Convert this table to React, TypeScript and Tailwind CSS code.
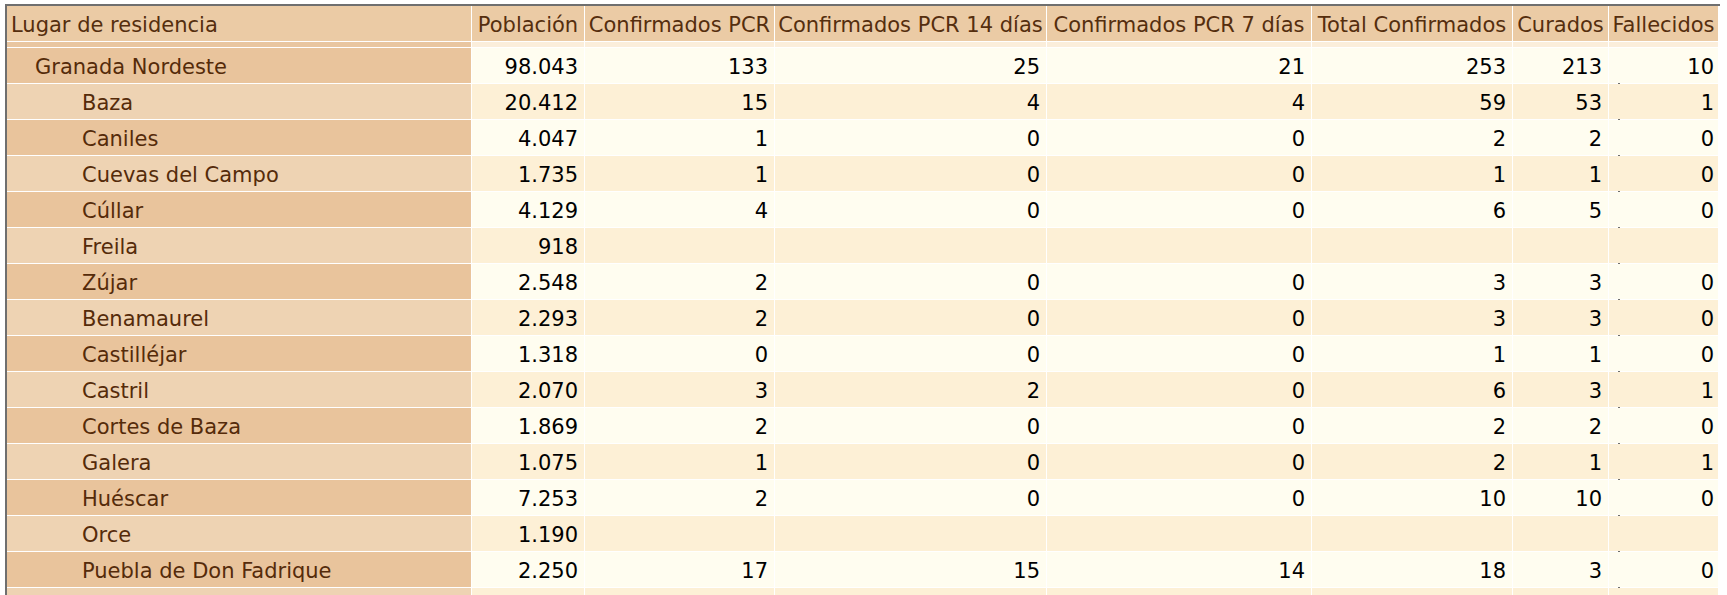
import React from "react";

type Row = { name: string; level: number; v: string[] };

const rows: Row[] = [
  { name: "Granada Nordeste", level: 1, v: ["98.043", "133", "25", "21", "253", "213", "10"] },
  { name: "Baza", level: 2, v: ["20.412", "15", "4", "4", "59", "53", "1"] },
  { name: "Caniles", level: 2, v: ["4.047", "1", "0", "0", "2", "2", "0"] },
  { name: "Cuevas del Campo", level: 2, v: ["1.735", "1", "0", "0", "1", "1", "0"] },
  { name: "Cúllar", level: 2, v: ["4.129", "4", "0", "0", "6", "5", "0"] },
  { name: "Freila", level: 2, v: ["918", "", "", "", "", "", ""] },
  { name: "Zújar", level: 2, v: ["2.548", "2", "0", "0", "3", "3", "0"] },
  { name: "Benamaurel", level: 2, v: ["2.293", "2", "0", "0", "3", "3", "0"] },
  { name: "Castilléjar", level: 2, v: ["1.318", "0", "0", "0", "1", "1", "0"] },
  { name: "Castril", level: 2, v: ["2.070", "3", "2", "0", "6", "3", "1"] },
  { name: "Cortes de Baza", level: 2, v: ["1.869", "2", "0", "0", "2", "2", "0"] },
  { name: "Galera", level: 2, v: ["1.075", "1", "0", "0", "2", "1", "1"] },
  { name: "Huéscar", level: 2, v: ["7.253", "2", "0", "0", "10", "10", "0"] },
  { name: "Orce", level: 2, v: ["1.190", "", "", "", "", "", ""] },
  { name: "Puebla de Don Fadrique", level: 2, v: ["2.250", "17", "15", "14", "18", "3", "0"] },
  { name: "", level: 2, v: ["872", "0", "0", "0", "15", "11", "0"] },
];

const headers = [
  "Población",
  "Confirmados PCR",
  "Confirmados PCR 14 días",
  "Confirmados PCR 7 días",
  "Total Confirmados",
  "Curados",
  "Fallecidos",
];

const cols = "grid grid-cols-[464px_112px_189px_271px_264px_200px_95px_109px] gap-x-px";
const font = { fontFamily: '"DejaVu Sans", Tahoma, sans-serif' };

export default function App() {
  return (
    <div className="min-h-[595px] bg-white pt-1 pl-[5px]" style={font}>
      <div className="w-[1715px] border-t-2 border-l-2 border-[#6f6f6f] bg-white text-[21px] leading-none">
        {/* header */}
        <div className={`${cols} h-[35px] bg-white`}>
          <div className="flex items-center bg-[#ebcba5] pt-[4px] pl-[4px] text-[#552e0e]">Lugar de residencia</div>
          {headers.map((h) => (
            <div
              key={h}
              className="flex items-center justify-center overflow-hidden whitespace-nowrap bg-[#ebcba5] pt-[4px] text-[#552e0e]"
            >
              {h}
            </div>
          ))}
        </div>
        {/* strip */}
        <div className={`${cols} mt-px h-[5px] w-[1613px] border-r-2 border-[#6f6f6f]`}>
          <div className="bg-[#e9c6a0]" />
          {headers.map((h) => (
            <div key={h} className="bg-[#fbeedb]" />
          ))}
        </div>
        {/* body */}
        <div className="mt-px flex w-[1613px] flex-col gap-y-px border-r-2 border-[#6f6f6f] bg-white">
          {rows.map((r, i) => {
            const dark = i % 2 === 0;
            return (
              <div key={i} className={`${cols} h-[35px]`}>
                <div
                  className={`flex items-center whitespace-nowrap pt-[4px] text-[#552b0a] ${
                    dark ? "bg-[#e9c49c]" : "bg-[#eed3b3]"
                  } ${r.level === 1 ? "pl-[28px]" : "pl-[75px]"}`}
                >
                  {r.name}
                </div>
                {r.v.map((val, j) => (
                  <div
                    key={j}
                    className={`flex items-center justify-end pt-[4px] text-black ${
                      dark ? "bg-[#fffdf0]" : "bg-[#fdf0d6]"
                    } ${j === 6 ? "pr-[4px]" : "pr-[6px]"}`}
                  >
                    {val}
                  </div>
                ))}
              </div>
            );
          })}
        </div>
      </div>
    </div>
  );
}
